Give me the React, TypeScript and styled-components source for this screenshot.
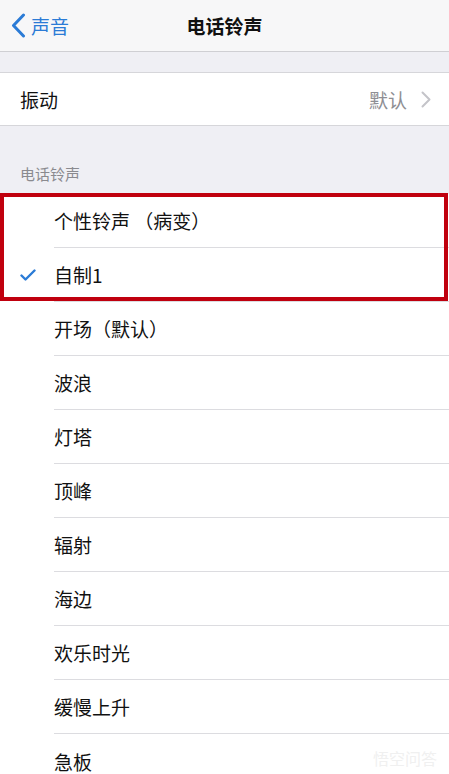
import React from "react";
import styled, { createGlobalStyle } from "styled-components";

const Global = createGlobalStyle`
  html, body { margin: 0; padding: 0; background: #efeff4; }
  body { font-family: "Noto Sans CJK SC", "Noto Sans", sans-serif; -webkit-font-smoothing: antialiased; }
`;

const Page = styled.div`
  width: 449px;
  height: 774px;
  overflow: hidden;
  background: #efeff4;
  position: relative;
`;

const NavBar = styled.div`
  height: 51px;
  background: #f7f7f8;
  border-bottom: 1px solid #cfcfd3;
  display: grid;
  grid-template-columns: 1fr auto 1fr;
  align-items: center;
`;

const BackButton = styled.div`
  display: flex;
  align-items: center;
  gap: 5px;
  padding-left: 11px;
  color: #2b7bd6;
  font-size: 19px;
`;

const Title = styled.div`
  font-size: 19px;
  font-weight: 700;
  color: #111;
`;

const Gap = styled.div`
  height: 20px;
`;

const Group = styled.div`
  background: #fff;
  border-top: 1px solid #d6d6da;
  border-bottom: 1px solid #d6d6da;
`;

const SettingRow = styled.div`
  height: 52px;
  display: flex;
  align-items: center;
  padding: 0 18px 0 20px;
  font-size: 19px;
  color: #111;
`;

const Value = styled.div`
  margin-left: auto;
  display: flex;
  align-items: center;
  gap: 14px;
  color: #8e8e93;
`;

const SectionHeader = styled.div`
  height: 68px;
  box-sizing: border-box;
  padding: 38px 0 0 20px;
  font-size: 15px;
  color: #8a8a8f;
  line-height: 20px;
`;

const List = styled.div`
  background: #fff;
`;

const Row = styled.div`
  height: 54px;
  display: flex;
  align-items: center;
`;

const CheckCell = styled.div`
  width: 54px;
  display: flex;
  align-items: center;
  padding-left: 20px;
  box-sizing: border-box;
`;

const RowBody = styled.div<{ $last?: boolean }>`
  flex: 1;
  height: 100%;
  display: flex;
  align-items: center;
  font-size: 19px;
  color: #111;
  border-bottom: ${(p) => (p.$last ? "none" : "1px solid #dcdce0")};
  box-sizing: border-box;
`;

const Highlight = styled.div`
  position: absolute;
  left: 0;
  right: 1px;
  top: 193px;
  height: 108px;
  border: 4px solid #c0000e;
  box-sizing: border-box;
  pointer-events: none;
`;

const Watermark = styled.div`
  position: absolute;
  right: 12px;
  bottom: 4px;
  font-size: 16px;
  color: #f0f0f0;
`;

const tones = [
  "个性铃声 （病变）",
  "自制1",
  "开场（默认）",
  "波浪",
  "灯塔",
  "顶峰",
  "辐射",
  "海边",
  "欢乐时光",
  "缓慢上升",
  "急板",
];

export default function App() {
  return (
    <Page>
      <Global />
      <NavBar>
        <BackButton>
          <svg width="15" height="25" viewBox="0 0 15 25">
            <path d="M12.5 2 L2.5 12.5 L12.5 23" fill="none" stroke="#2b7bd6" strokeWidth="3" strokeLinecap="round" strokeLinejoin="round" />
          </svg>
          声音
        </BackButton>
        <Title>电话铃声</Title>
        <div />
      </NavBar>
      <Gap />
      <Group>
        <SettingRow>
          振动
          <Value>
            默认
            <svg width="10" height="17" viewBox="0 0 10 17">
              <path d="M1.5 1.5 L8.5 8.5 L1.5 15.5" fill="none" stroke="#c4c4c9" strokeWidth="2" strokeLinecap="round" strokeLinejoin="round" />
            </svg>
          </Value>
        </SettingRow>
      </Group>
      <SectionHeader>电话铃声</SectionHeader>
      <List>
        {tones.map((t, i) => (
          <Row key={t}>
            <CheckCell>
              {t === "自制1" && (
                <svg width="16" height="12" viewBox="0 0 16 12">
                  <path d="M1.5 6.5 L5.5 10.5 L14.5 1.5" fill="none" stroke="#2b7bd6" strokeWidth="2.4" strokeLinecap="round" strokeLinejoin="round" />
                </svg>
              )}
            </CheckCell>
            <RowBody $last={i === tones.length - 1}>{t}</RowBody>
          </Row>
        ))}
      </List>
      <Highlight />
      <Watermark>悟空问答</Watermark>
    </Page>
  );
}
